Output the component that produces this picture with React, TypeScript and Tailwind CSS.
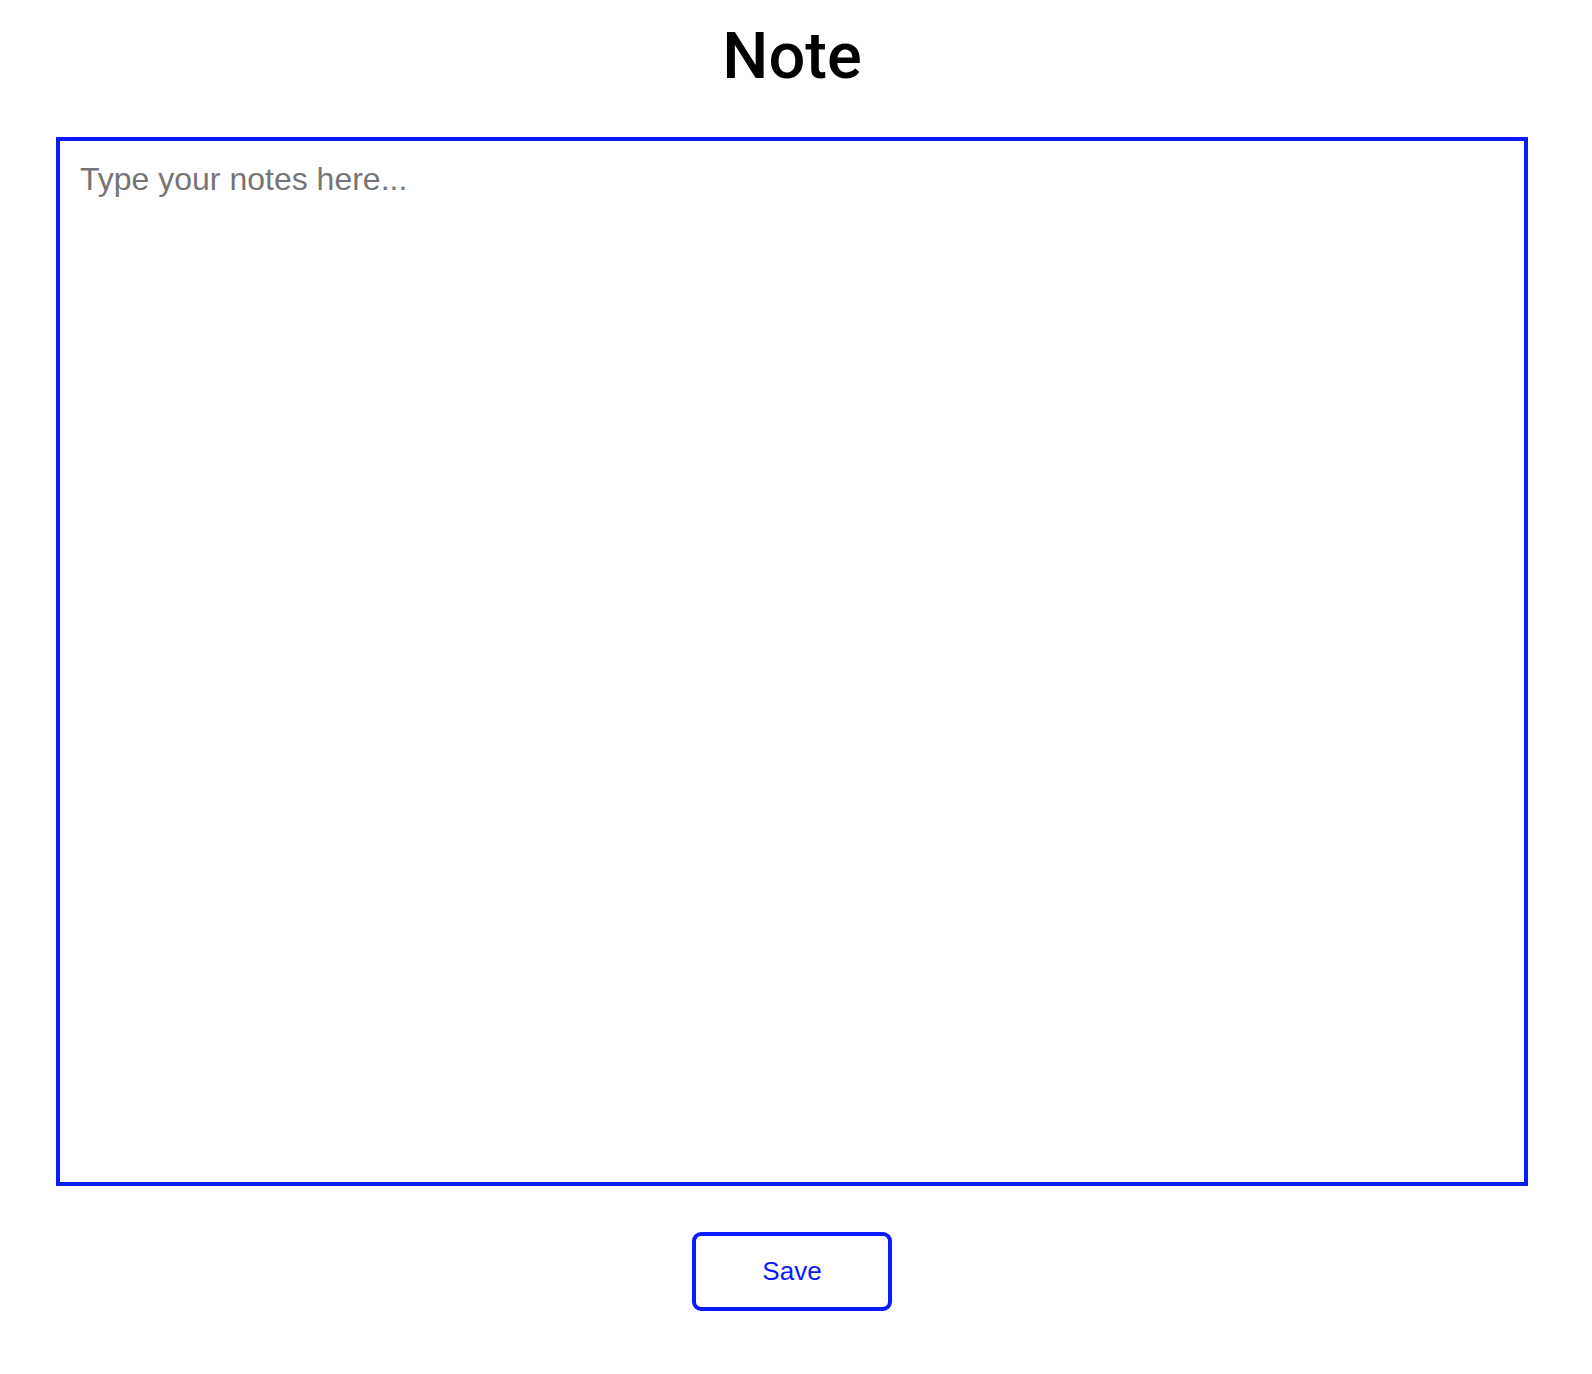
import { useState } from 'react';

export default function App() {
  const [text, setText] = useState('');

  return (
    <div className="min-h-screen w-full bg-white">
      <div className="ml-[56px] flex w-[1472px] flex-col items-center">
        <h1 className="mt-[24px] text-[65px] leading-none font-medium text-black [font-family:Roboto,'Noto_Sans',sans-serif]">
          Note
        </h1>

        <textarea
          value={text}
          onChange={(e) => setText(e.target.value)}
          placeholder="Type your notes here..."
          className="mt-[48px] block h-[1049px] w-full resize-none border-4 border-[#0a1aff] px-[20px] py-[20px] text-[32px] leading-[1.15] text-black outline-none placeholder:text-[#757575] [font-family:'Liberation_Sans',Arial,sans-serif]"
        />

        <button
          type="button"
          onClick={() => setText(text)}
          className="mt-[46px] h-[79px] w-[200px] rounded-[9px] border-4 border-[#0a1aff] bg-white text-[26px] text-[#0a1aff] [font-family:'Liberation_Sans',Arial,sans-serif]"
        >
          Save
        </button>
      </div>
    </div>
  );
}
